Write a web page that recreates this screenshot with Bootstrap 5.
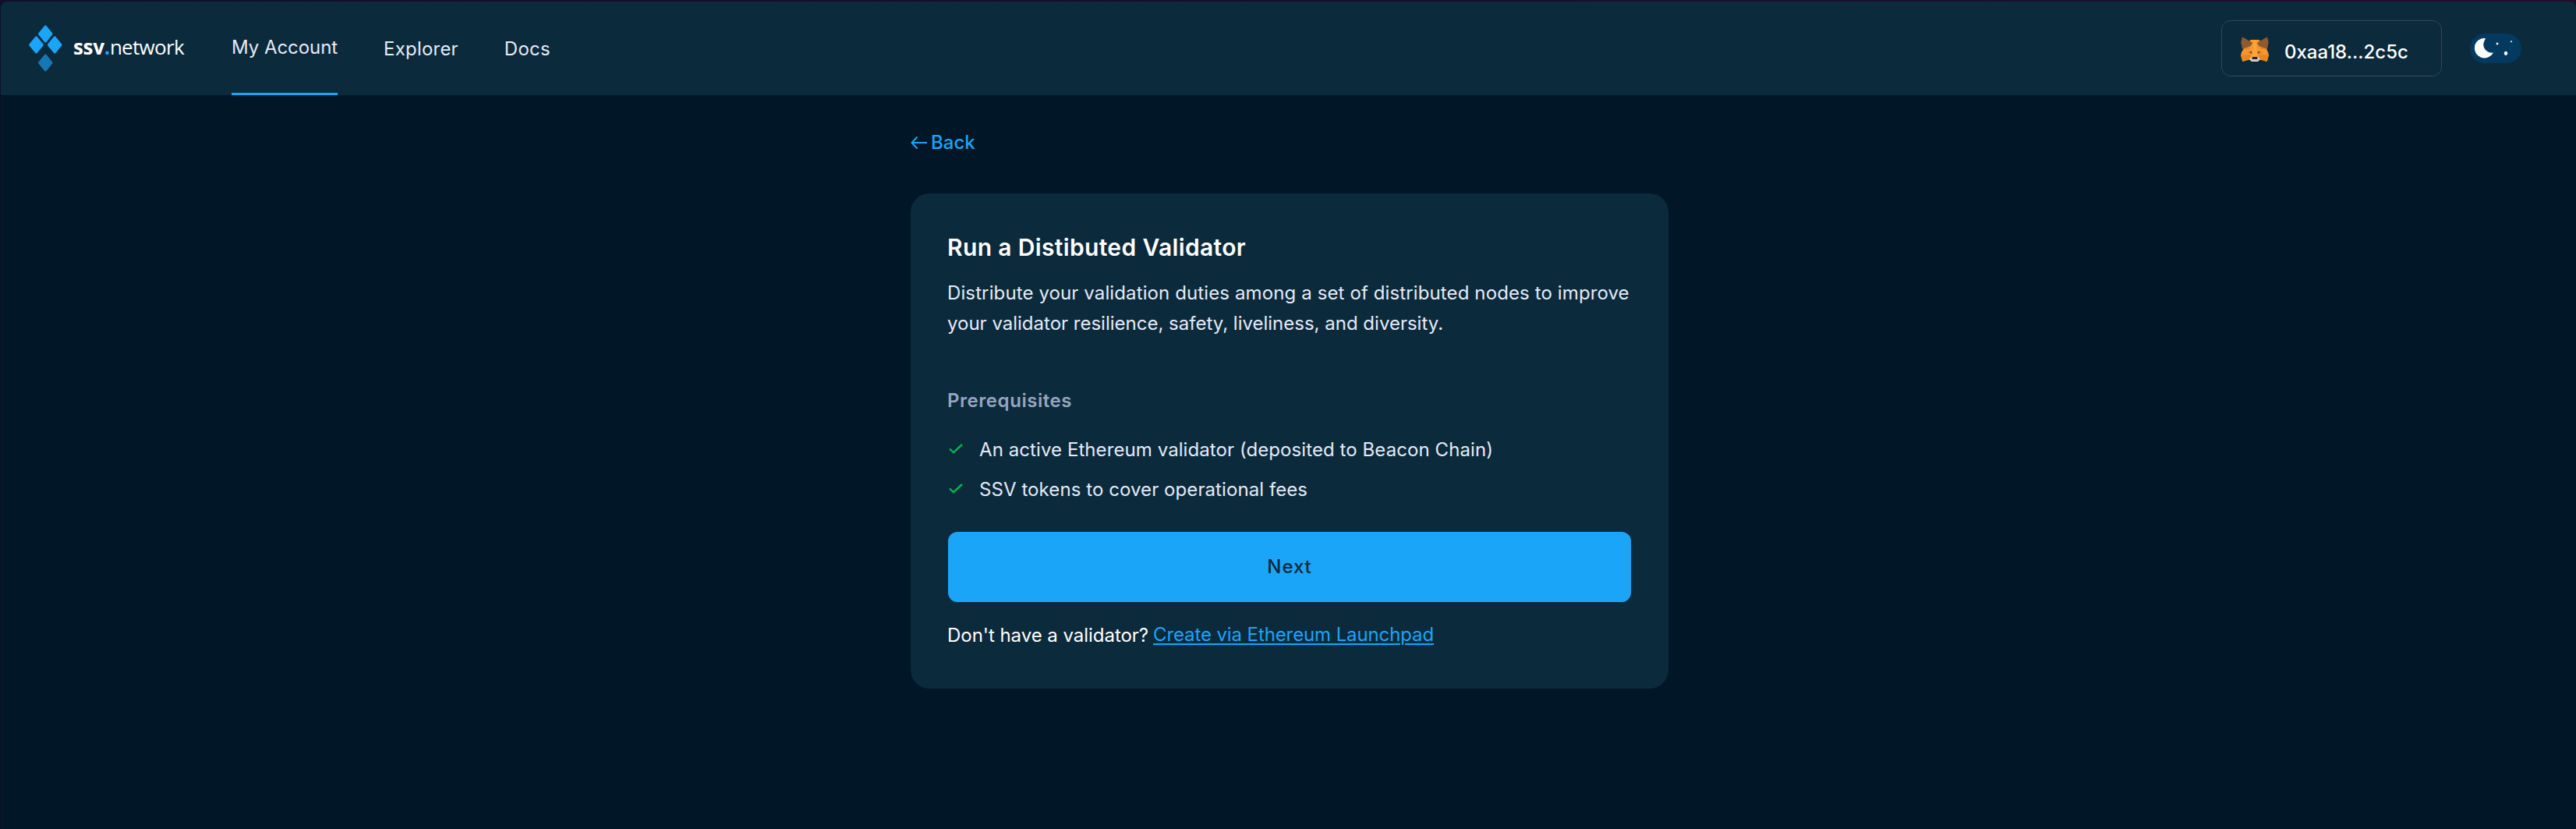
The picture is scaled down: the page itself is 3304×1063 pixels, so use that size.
<!DOCTYPE html>
<html lang="en">
<head>
<meta charset="utf-8">
<title>ssv.network</title>
<link href="https://cdn.jsdelivr.net/npm/bootstrap@5.3.0/dist/css/bootstrap.min.css" rel="stylesheet">
<style>
html, body { height: 100%; }
body { background: linear-gradient(90deg, #120e2b, #200f2c); padding: 2px 0 0 1px; font-family: Inter, sans-serif; font-size: 24px; color: #e6eaf7; overflow: hidden; }
.app-window { height: 1061px; background: #011627; border-radius: 8px 8px 0 0; overflow: hidden; }
.topbar { height: 120px; background: #0b2a3c; padding: 0 70px 0 35px; }
.brand-text { font-family: "Open Sans", sans-serif; font-size: 26px; color: #fff; margin-left: 14px; padding-bottom: 5px; line-height: 36px; width: 145px; white-space: nowrap; letter-spacing: -0.7px; }
.brand-text b { letter-spacing: -0.3px; }
.brand-text .brand-dot { color: #1ba5f8; }
.topnav { margin-left: 58px; height: 120px; gap: 59px; }
.topnav .nav-link { padding: 0; height: 120px; line-height: 122px; color: #e6eaf7; white-space: nowrap; letter-spacing: 0.22px; }
.topnav .nav-link.active { width: 136px; line-height: 118px; border-bottom: 3px solid #1ba5f8; letter-spacing: -0.05px; }
.wallet { width: 283px; height: 72px; border: 1px solid #34455a; border-radius: 12px; color: #fff; padding: 2px 0 0 24px; font-weight: 500; }
.wallet svg { margin-right: 20px; }
.wallet span { margin-top: 7px; }
.theme-toggle { margin-left: 36px; }
.flow { width: 972px; margin-left: 1167px; padding-top: 42px; }
.back-link { color: #1ba5f8; font-weight: 500; line-height: 38px; text-decoration: none; gap: 4px; }
.panel { margin-top: 46px; height: 635px; background: #0b2a3c; border-radius: 24px; padding: 48px; }
.text-line { display: block; white-space: nowrap; width: max-content; margin-left: -1px; }
.panel h1 { font-size: 30px; font-weight: 600; line-height: 42px; color: #fff; margin: 0 0 0 -1px; letter-spacing: 0.35px; }
.intro { line-height: 39px; margin: 18px 0 0; }
.intro .text-line:first-child { letter-spacing: 0.115px; }
.prereq-title { font-size: 24px; font-weight: 600; color: #97a5c1; line-height: 38px; margin: 61px 0 0 -1px; letter-spacing: 0.55px; }
.req { margin: 18px 0 0; line-height: 51px; letter-spacing: 0.08px; }
.req li { gap: 21px; padding-left: 1px; }
.req svg { margin-top: -2px; }
.btn-next, .btn-next:hover { height: 90px; border: 0; border-radius: 12px; background: #1ba5f8; color: #0b2a3c; font-size: 24px; font-weight: 500; margin-top: 29px; letter-spacing: 0.9px; }
.foot { margin: 24px 0 0 -1px; line-height: 38px; color: #fff; gap: 6px; letter-spacing: -0.04px; }
.foot a { color: #1ba5f8; margin-top: -1px; letter-spacing: -0.11px; text-decoration-thickness: 2px; text-underline-offset: 3px; }
</style>
<script src="https://cdn.jsdelivr.net/npm/bootstrap@5.3.0/dist/js/bootstrap.bundle.min.js"></script>
</head>
<body>
<div class="app-window">
  <header class="topbar d-flex align-items-center">
    <a class="d-flex align-items-center text-decoration-none" href="#">
      <svg width="44" height="62" viewBox="0 0 44 62" fill="#1ba5f8" stroke="#1ba5f8" stroke-width="3" stroke-linejoin="round"><path d="M22.300 3L30 12.500 22.300 22 14.500 12.500zM10.500 17L18.300 26.500 10.500 36 2.700 26.500zM34.200 17L42 26.500 34.200 36 26.400 26.500z"/><path d="M22.300 40L30 49.500 22.300 59 14.500 49.500z" fill="#1777b3" stroke="#1777b3"/></svg>
      <span class="brand-text"><b>ssv</b><b class="brand-dot">.</b>network</span>
    </a>
    <nav class="topnav nav flex-nowrap">
      <a class="nav-link active" href="#">My Account</a>
      <a class="nav-link" href="#">Explorer</a>
      <a class="nav-link" href="#">Docs</a>
    </nav>
    <div class="wallet ms-auto d-flex align-items-center">
      <svg width="36" height="32" viewBox="0 0 108 96">
        <path fill="#f7962f" d="M38 12H70L96 40 106 62 108 72 101 96 74 88 66 94H42L34 88 7 96 0 72 3 60 14 42z"/>
        <path fill="#e8871f" d="M0 70L40 70 34 88 7 96zM108 70H68L74 88 101 96zM38 52L24 62 46 68zM70 52L84 62 62 68zM12 46L40 32 30 50zM96 46L68 32 78 50z"/>
        <path fill="#fba33c" d="M46 14H62L60 46 66 76H42L48 46z"/>
        <path fill="#8e5a30" d="M6 1L46 24 38 36 6 48 1 22zM102 1L62 24 70 36 102 48 107 22z"/>
        <path fill="#d9ccc0" d="M32 86L44 78H64L76 86 66 96H42z"/>
        <path fill="#2a2524" d="M45 78H63L65 87H43z"/>
        <path fill="#4a4644" d="M32 59L43 58 42 65zM76 59L65 58 66 65z"/>
      </svg>
      <span>0xaa18...2c5c</span>
    </div>
    <svg class="theme-toggle" width="66" height="38" viewBox="0 0 66 38"><rect width="66" height="38" rx="19" fill="#043a5f"/><g fill="#fff"><path d="M20 6A12.800 12.800 0 1 0 30 24.500C24 25.500 17.500 21 17.300 14.500C17.200 11 19 8.500 20 6z"/><path d="M35 11.200L36.700 13 35 14.800 33.300 13zM53 9L54.300 10.300 53 11.600 51.700 10.300z"/><ellipse cx="46" cy="25.300" rx="2.200" ry="2.600"/></g></svg>
  </header>
  <main class="flow">
    <a class="back-link d-inline-flex align-items-center" href="#">
      <svg width="22" height="18" viewBox="0 0 22 18" fill="none" stroke="#1ba5f8" stroke-width="2"><path d="M21 9H2M8.500 1.500L1.500 9 8.500 16.500"/></svg><span>Back</span></a>
    <section class="panel">
      <h1>Run a Distibuted Validator</h1>
      <p class="intro"><span class="text-line">Distribute your validation duties among a set of distributed nodes to improve</span><span class="text-line">your validator resilience, safety, liveliness, and diversity.</span></p>
      <h2 class="prereq-title">Prerequisites</h2>
      <ul class="req list-unstyled">
        <li class="d-flex align-items-center"><svg width="18" height="13" viewBox="0 0 18 13" fill="none" stroke="#08b44d" stroke-width="2.400"><path d="M1 6.500L6 11.200 17 1"/></svg><span>An active Ethereum validator (deposited to Beacon Chain)</span></li>
        <li class="d-flex align-items-center"><svg width="18" height="13" viewBox="0 0 18 13" fill="none" stroke="#08b44d" stroke-width="2.400"><path d="M1 6.500L6 11.200 17 1"/></svg><span>SSV tokens to cover operational fees</span></li>
      </ul>
      <button class="btn btn-next w-100">Next</button>
      <div class="foot d-flex"><span>Don't have a validator?</span><a href="#">Create via Ethereum Launchpad</a></div>
    </section>
  </main>
</div>
</body>
</html>
